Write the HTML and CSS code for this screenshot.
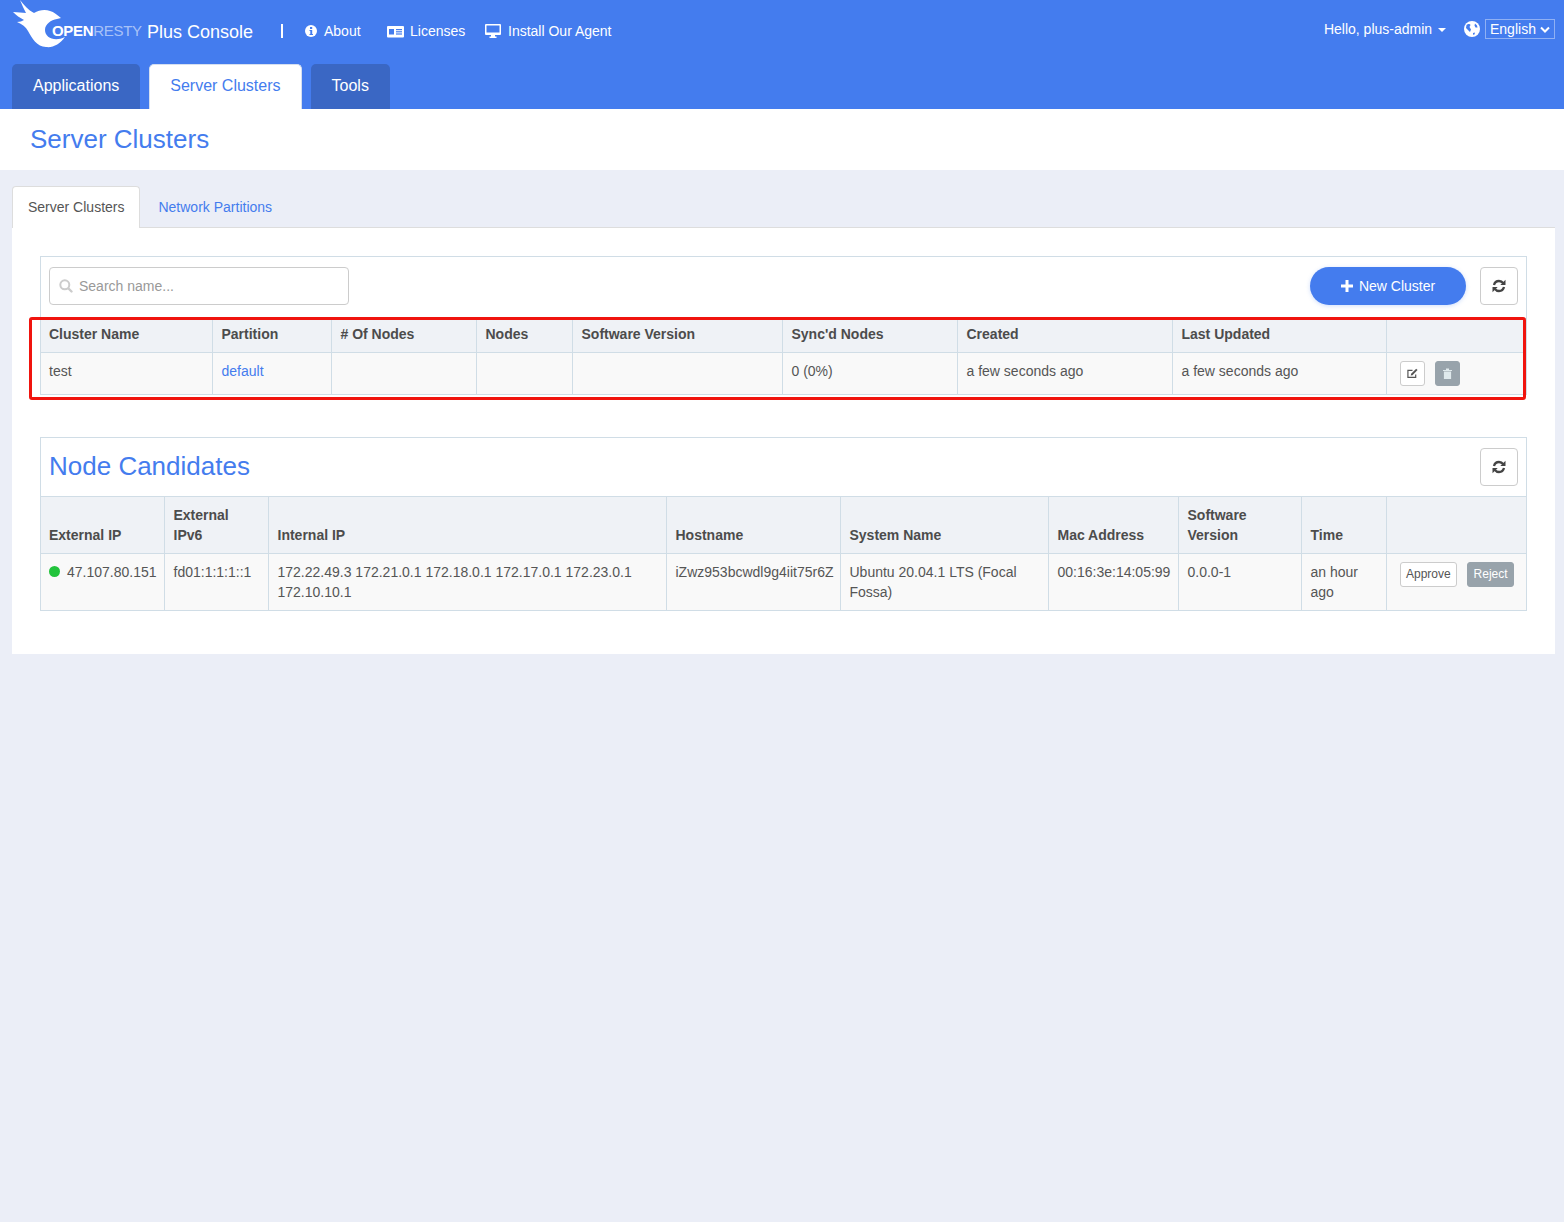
FILE: index.html
```html
<!DOCTYPE html>
<html lang="en">
<head>
    <meta charset="UTF-8">
    <title>OpenResty Plus Console</title>
    <link rel="stylesheet" href="styles.css">
</head>
<body>

<header class="header">
    <div class="top-bar">
        <a class="brand">
            <svg class="bird" viewBox="0 0 56 50" width="56" height="50">
                <path fill="#fff" d="M7 0 C11 5 15 10 21 13 C26 10 32 9 37 11 C41 12 44 15 48 18 L44 19 C38 20 32 24 32 30 C32 38 42 42 52 37 C47 44 40 48 33 47 C24 47 19 38 15 31 C13 27 9 24 4 22 C7 22 9 21 11 20 C7 18 3 15 0 12 C5 12 9 13 13 13 C11 9 9 5 7 0 Z"/>
            </svg>
            <span class="logo-text"><b>OPEN</b>RESTY</span>
            <span class="brand-name">Plus Console</span>
        </a>
        <span class="divider"></span>
        <nav class="top-nav">
            <a class="about-link">
                <svg viewBox="0 0 12 12" width="12" height="12"><circle cx="6" cy="6" r="6" fill="#fff"/><rect x="5" y="2" width="2.200" height="2" fill="#447cee"/><path fill="#447cee" d="M4.500 5h2.700v4h.8v1H4.500V9h.8V6h-.8z"/></svg>
                About
            </a>
            <a class="licenses-link">
                <svg viewBox="0 0 17 13" width="17" height="13"><rect y="1" width="17" height="11.500" rx="1" fill="#fff"/><rect x="2" y="4" width="5" height="5.500" fill="#447cee"/><rect x="9" y="4" width="6" height="1.200" fill="#447cee"/><rect x="9" y="6.200" width="6" height="1.200" fill="#447cee"/><rect x="9" y="8.400" width="6" height="1.200" fill="#447cee"/></svg>
                Licenses
            </a>
            <a class="agent-link">
                <svg viewBox="0 0 16 14" width="16" height="14"><path fill="#fff" d="M1 0h14a1 1 0 0 1 1 1v9a1 1 0 0 1-1 1H10v1.500h1.500V14h-7v-1.500H6V11H1a1 1 0 0 1-1-1V1a1 1 0 0 1 1-1zm.500 1.500V8.500h13V1.500z"/></svg>
                Install Our Agent
            </a>
        </nav>
        <div class="user-area">
            <span class="hello">Hello, plus-admin <i class="caret"></i></span>
            <svg class="globe" viewBox="0 0 16 16" width="16" height="16">
                <circle cx="8" cy="8" r="8" fill="#fff"/>
                <path fill="#447cee" d="M2.500 4 C4 2.500 6 3 6.500 4 L5.500 6 L7 8.500 L6 11 L3.500 8.500 L2 7 Z M11 2.500 L13 4.500 L13.500 6.500 L11.500 6.500 L10.500 4.500 Z M9 12 L11 11.500 L10.500 13.500 L9 13.800 Z"/>
            </svg>
            <span class="lang-select">English
                <svg viewBox="0 0 10 7" width="10" height="7"><path fill="none" stroke="#fff" stroke-width="2" d="M1 1.500l4 4 4-4"/></svg>
            </span>
        </div>
    </div>
    <div class="main-tabs">
        <a class="main-tab">Applications</a>
        <a class="main-tab active">Server Clusters</a>
        <a class="main-tab">Tools</a>
    </div>
</header>

<div class="page-title">
    <h1>Server Clusters</h1>
</div>

<div class="content">
    <div class="sub-tabs">
        <a class="sub-tab active">Server Clusters</a>
        <a class="sub-tab">Network Partitions</a>
    </div>

    <div class="panel">
        <!-- clusters -->
        <div class="box">
            <div class="toolbar">
                <div class="search">
                    <svg viewBox="0 0 14 14" width="14" height="14"><circle cx="5.800" cy="5.800" r="4.500" fill="none" stroke="#ccc" stroke-width="2"/><path stroke="#ccc" stroke-width="2.400" stroke-linecap="round" d="M9.500 9.500l3 3"/></svg>
                    <span>Search name...</span>
                </div>
                <div class="toolbar-right">
                    <a class="new-btn">
                        <svg viewBox="0 0 12 12" width="12" height="12"><path fill="#fff" d="M4.500 0h3v4.500H12v3H7.500V12h-3V7.500H0v-3h4.500z"/></svg>
                        New Cluster
                    </a>
                    <a class="refresh-btn">
                        <svg viewBox="0 0 14 14" width="14" height="14"><path fill="none" stroke="#444" stroke-width="2.300" d="M2 6C2.600 3.500 4.600 2 7 2c1.800 0 3.200.8 4.200 2.200M12 8c-.6 2.500-2.600 4-5 4-1.800 0-3.200-.8-4.200-2.200"/><path fill="#444" d="M13.500 0.800V6H8.300zM.5 13.200V8h5.200z"/></svg>
                    </a>
                </div>
            </div>
            <table class="data-table clusters">
                <colgroup>
                    <col class="c-name"><col class="c-part"><col class="c-count"><col class="c-nodes"><col class="c-ver"><col class="c-sync"><col class="c-created"><col class="c-updated"><col>
                </colgroup>
                <thead>
                    <tr>
                        <th>Cluster Name</th><th>Partition</th><th># Of Nodes</th><th>Nodes</th><th>Software Version</th><th>Sync'd Nodes</th><th>Created</th><th>Last Updated</th><th></th>
                    </tr>
                </thead>
                <tbody>
                    <tr>
                        <td>test</td>
                        <td><a class="link">default</a></td>
                        <td></td>
                        <td></td>
                        <td></td>
                        <td>0 (0%)</td>
                        <td>a few seconds ago</td>
                        <td>a few seconds ago</td>
                        <td class="actions">
                            <a class="icon-btn">
                                <svg viewBox="0 0 12 12" width="11" height="11"><path fill="none" stroke="#555" stroke-width="1.300" d="M9.500 7v3.300H1V2.500h5"/><path fill="#555" d="M10 .8l1.500 1.500L6 7.800l-2 .5.500-2z"/></svg>
                            </a>
                            <a class="icon-btn grey">
                                <svg viewBox="0 0 10 12" width="9" height="11"><path fill="#dfe9ec" d="M0 2h3.300V.5h3.400V2H10v1.200H0zM1 3.800h8V12H1z"/></svg>
                            </a>
                        </td>
                    </tr>
                </tbody>
            </table>
        </div>
        <div class="highlight"></div>

        <!-- candidates -->
        <div class="box candidates">
            <div class="section-head">
                <h2>Node Candidates</h2>
                <a class="refresh-btn">
                    <svg viewBox="0 0 14 14" width="14" height="14"><path fill="none" stroke="#444" stroke-width="2.300" d="M2 6C2.600 3.500 4.600 2 7 2c1.800 0 3.200.8 4.200 2.200M12 8c-.6 2.500-2.600 4-5 4-1.800 0-3.200-.8-4.200-2.200"/><path fill="#444" d="M13.500 0.800V6H8.300zM.5 13.200V8h5.200z"/></svg>
                </a>
            </div>
            <table class="data-table nodes">
                <colgroup>
                    <col class="n-ext"><col class="n-ipv6"><col class="n-int"><col class="n-host"><col class="n-sys"><col class="n-mac"><col class="n-ver"><col class="n-time"><col>
                </colgroup>
                <thead>
                    <tr>
                        <th>External IP</th><th>External IPv6</th><th>Internal IP</th><th>Hostname</th><th>System Name</th><th>Mac Address</th><th>Software Version</th><th>Time</th><th></th>
                    </tr>
                </thead>
                <tbody>
                    <tr>
                        <td class="ip-cell"><i class="status-dot"></i>47.107.80.151</td>
                        <td>fd01:1:1:1::1</td>
                        <td>172.22.49.3 172.21.0.1 172.18.0.1 172.17.0.1 172.23.0.1 172.10.10.1</td>
                        <td>iZwz953bcwdl9g4iit75r6Z</td>
                        <td>Ubuntu 20.04.1 LTS (Focal Fossa)</td>
                        <td>00:16:3e:14:05:99</td>
                        <td>0.0.0-1</td>
                        <td>an hour ago</td>
                        <td class="actions">
                            <a class="text-btn">Approve</a>
                            <a class="text-btn grey">Reject</a>
                        </td>
                    </tr>
                </tbody>
            </table>
        </div>
    </div>
</div>

</body>
</html>
```

FILE: styles.css
```css
* {
    box-sizing: border-box;
}

body {
    margin: 0;
    min-height: 1222px;
    background: #ebeef7;
    font-family: "Liberation Sans", Arial, sans-serif;
    font-size: 14px;
    color: #555;
}

a {
    text-decoration: none;
}

/* header */
.header {
    height: 109px;
    background: #447cee;
    color: #fff;
}

.top-bar {
    height: 64px;
    display: flex;
    align-items: flex-start;
    padding-left: 13px;
    padding-right: 9px;
}

.brand {
    display: flex;
    align-items: flex-start;
    position: relative;
    width: 241px;
    height: 50px;
}

.bird {
    flex: none;
}

.logo-text {
    position: absolute;
    left: 39px;
    top: 22px;
    font-size: 15px;
    letter-spacing: -0.3px;
    color: rgba(255, 255, 255, 0.55);
}

.logo-text b {
    color: #fff;
}

.brand-name {
    position: absolute;
    left: 134px;
    top: 22px;
    font-size: 18px;
    white-space: nowrap;
}

.divider {
    width: 2px;
    height: 14px;
    background: #fff;
    margin: 24px 0 0 27px;
}

.top-nav {
    display: flex;
    margin-left: 22px;
    margin-top: 22px;
}

.top-nav a {
    display: flex;
    align-items: center;
    gap: 7px;
    color: #fff;
    height: 18px;
}

.about-link {
    width: 82px;
}

.licenses-link {
    width: 98px;
    gap: 6px !important;
}

.user-area {
    margin-left: auto;
    margin-top: 19px;
    display: flex;
    align-items: center;
}

.hello {
    white-space: nowrap;
}

.caret {
    display: inline-block;
    border-top: 4px solid #fff;
    border-left: 4px solid transparent;
    border-right: 4px solid transparent;
    vertical-align: middle;
    margin-left: 2px;
}

.globe {
    margin-left: 18px;
}

.lang-select {
    margin-left: 5px;
    width: 70px;
    height: 20px;
    border: 1px solid #8fb0f4;
    padding-left: 4px;
    display: flex;
    align-items: center;
    gap: 4px;
}

.main-tabs {
    display: flex;
    gap: 9px;
    padding-left: 12px;
    height: 45px;
}

.main-tab {
    padding: 0 21px;
    line-height: 43px;
    font-size: 16px;
    color: #fff;
    background: #3a67c4;
    border-radius: 5px 5px 0 0;
}

.main-tab.active {
    background: #fff;
    color: #447cee;
    border: 1px solid #d5dff0;
    border-bottom: none;
    padding: 0 20px;
    line-height: 41px;
}

/* page title */
.page-title {
    height: 61px;
    background: #fff;
    padding-left: 30px;
}

.page-title h1 {
    margin: 0;
    font-size: 26px;
    font-weight: normal;
    line-height: 60px;
    color: #447cee;
}

/* sub tabs */
.content {
    padding: 16px 9px 0 12px;
}

.sub-tabs {
    display: flex;
    height: 42px;
    border-bottom: 1px solid #ddd;
}

.sub-tab {
    padding: 0 18px;
    line-height: 42px;
    color: #447cee;
}

.sub-tab.active {
    height: 42px;
    padding: 0 15px;
    line-height: 40px;
    color: #555;
    background: #fff;
    border: 1px solid #ddd;
    border-bottom: none;
    border-radius: 4px 4px 0 0;
}

.panel {
    position: relative;
    background: #fff;
    padding: 28px 28px 43px;
}

.box {
    border: 1px solid #d0dde6;
    border-bottom: none;
}

.candidates {
    margin-top: 42px;
}

.toolbar {
    height: 61px;
    padding: 10px 8px 0;
    display: flex;
    justify-content: space-between;
    align-items: flex-start;
}

.toolbar-right {
    display: flex;
    gap: 14px;
}

.search {
    width: 300px;
    height: 38px;
    border: 1px solid #ccc;
    border-radius: 4px;
    display: flex;
    align-items: center;
    gap: 6px;
    padding-left: 9px;
    color: #999;
}

.new-btn {
    width: 156px;
    height: 38px;
    border-radius: 19px;
    background: #447cee;
    color: #fff;
    display: flex;
    align-items: center;
    justify-content: center;
    gap: 6px;
    box-shadow: 0 1px 4px rgba(68, 124, 238, 0.25);
}

.refresh-btn {
    width: 38px;
    height: 38px;
    border: 1px solid #ccc;
    border-radius: 4px;
    background: #fff;
    display: flex;
    align-items: center;
    justify-content: center;
}

.section-head {
    height: 58px;
    padding: 0 8px;
    display: flex;
    justify-content: space-between;
    align-items: center;
}

.section-head h2 {
    margin: 0 0 2px;
    font-size: 26px;
    font-weight: normal;
    color: #447cee;
}

/* tables */
.data-table {
    width: 100%;
    table-layout: fixed;
    border-collapse: collapse;
    line-height: 20px;
}

.data-table th,
.data-table td {
    border: 1px solid #d0dde6;
    padding: 6px 7px 6px 9px;
    text-align: left;
    vertical-align: bottom;
}

.data-table tr > :first-child {
    border-left: none;
    padding-left: 8px;
}

.data-table tr > :last-child {
    border-right: none;
}

.data-table th {
    background: #eff2f6;
    color: #4c4c4c;
    font-weight: bold;
    padding-top: 8px;
    padding-bottom: 8px;
}

.data-table.clusters th {
    padding-top: 5px;
    padding-bottom: 8px;
}

.data-table td {
    background: #f9f9f9;
    vertical-align: top;
    padding-top: 8px;
    padding-bottom: 8px;
}

.clusters td {
    height: 42px;
}

.ip-cell {
    white-space: nowrap;
}

.link {
    color: #447cee;
}

.c-name { width: 171px; }
.c-part { width: 119px; }
.c-count { width: 145px; }
.c-nodes { width: 96px; }
.c-ver { width: 210px; }
.c-sync { width: 175px; }
.c-created { width: 215px; }
.c-updated { width: 214px; }

.n-ext { width: 123px; }
.n-ipv6 { width: 104px; }
.n-int { width: 398px; }
.n-host { width: 174px; }
.n-sys { width: 208px; }
.n-mac { width: 130px; }
.n-ver { width: 123px; }
.n-time { width: 85px; }

.data-table .actions {
    padding: 8px 13px 0;
    white-space: nowrap;
}

.icon-btn {
    display: inline-flex;
    align-items: center;
    justify-content: center;
    width: 25px;
    height: 25px;
    border: 1px solid #ccc;
    border-radius: 3px;
    background: #fff;
    margin-right: 7px;
}

.icon-btn.grey {
    background: #98a3ab;
    border-color: #98a3ab;
}

.text-btn {
    display: inline-block;
    height: 25px;
    padding: 0 5.5px;
    font-size: 12px;
    line-height: 23px;
    color: #555;
    background: #fff;
    border: 1px solid #ccc;
    border-radius: 3px;
    margin-right: 6px;
}

.text-btn.grey {
    background: #98a3ab;
    border-color: #98a3ab;
    color: #fff;
    margin-right: 0;
}

.status-dot {
    display: inline-block;
    width: 11px;
    height: 11px;
    border-radius: 50%;
    background: #22c33c;
    margin-right: 7px;
}

/* red box over the clusters table */
.highlight {
    position: absolute;
    left: 17px;
    top: 89px;
    width: 1497px;
    height: 83px;
    border: 3px solid #f0140e;
    border-radius: 3px;
}
```
